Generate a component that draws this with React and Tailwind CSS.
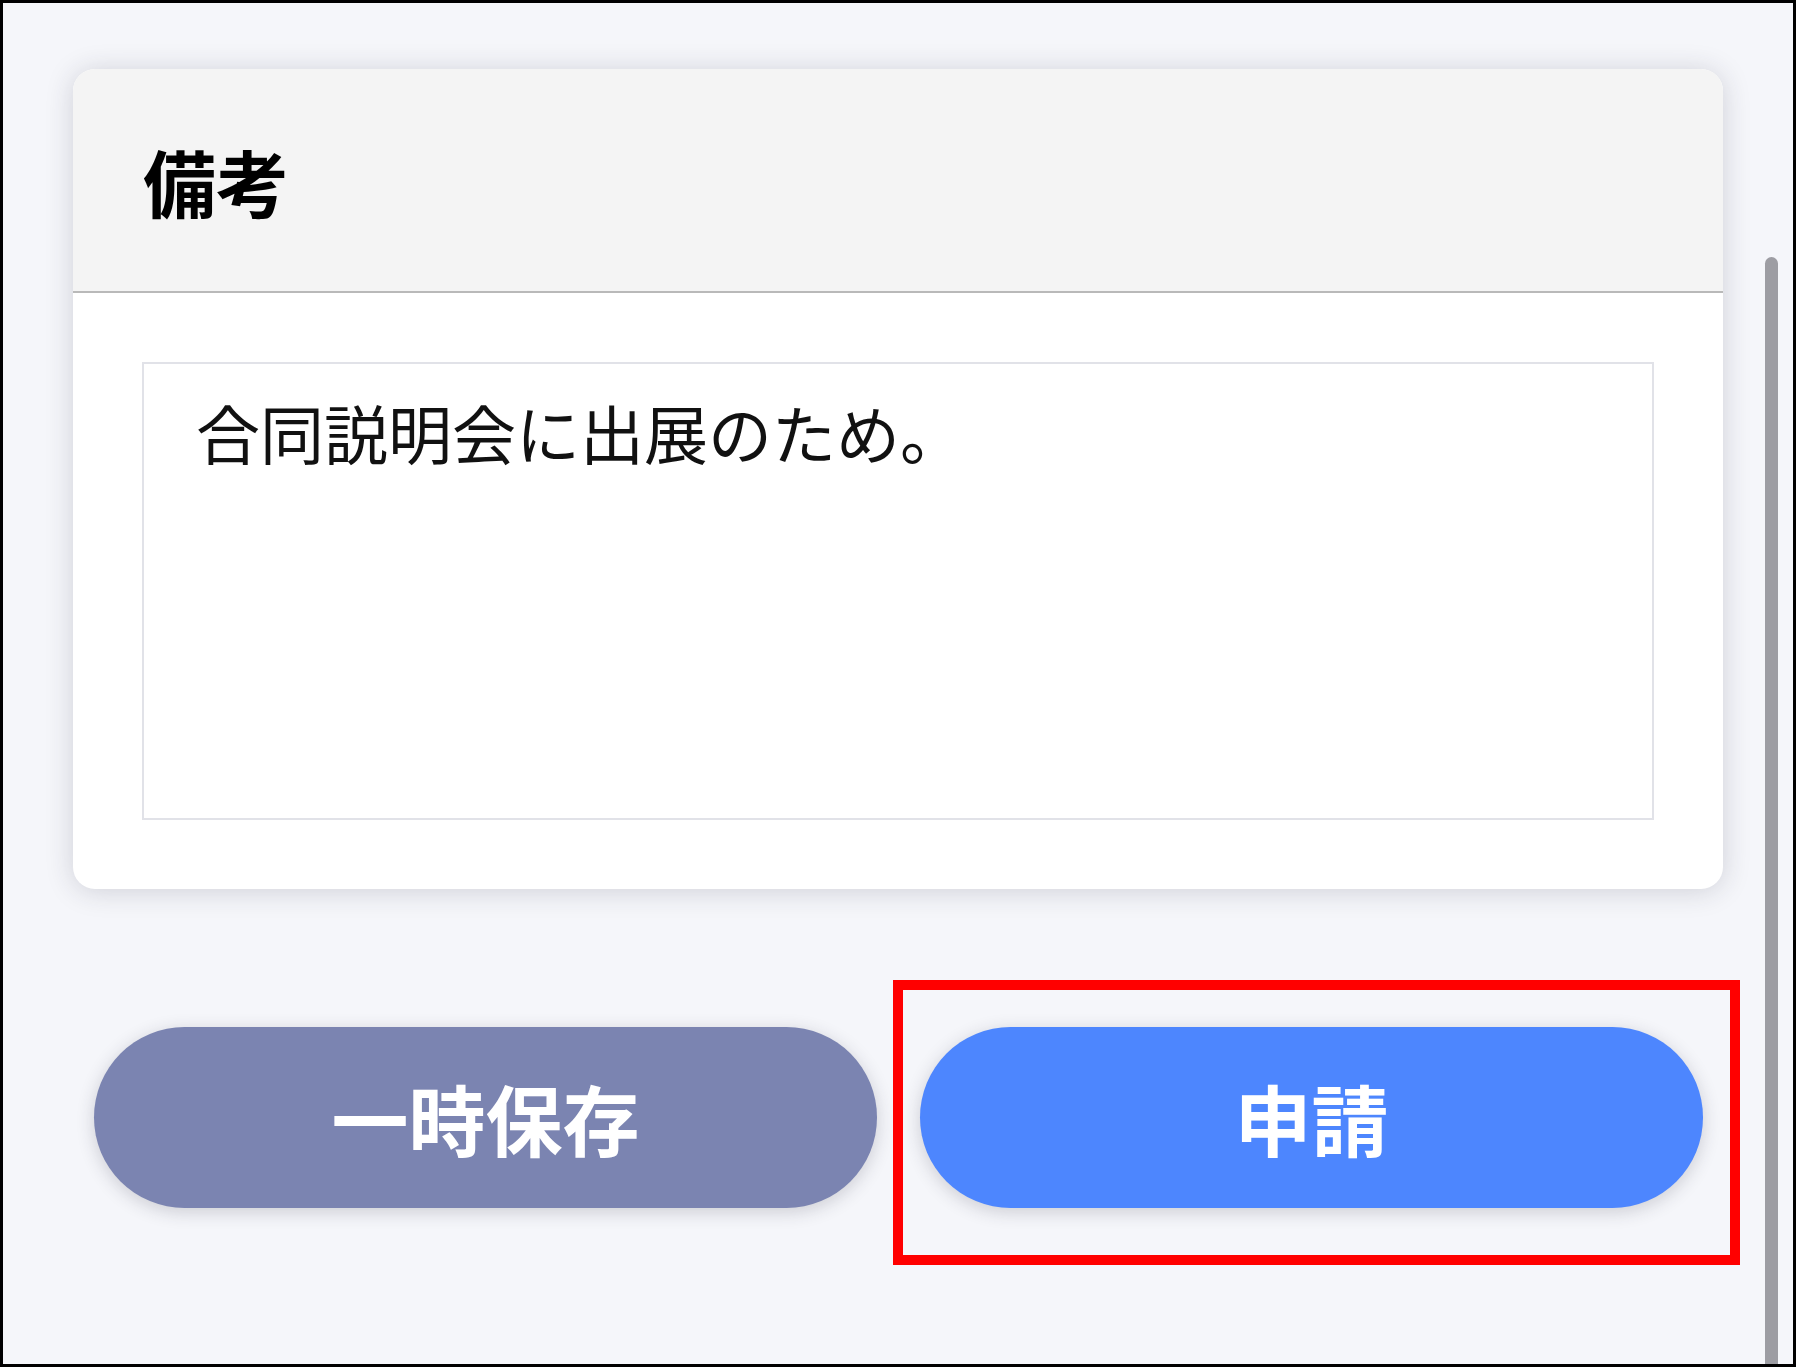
export default function App() {
  const font = { fontFamily: '"Noto Sans CJK JP", "Noto Sans", sans-serif' };
  return (
    <div
      className="relative w-[1796px] h-[1367px] overflow-hidden border-[3px] border-black bg-[#f5f6fa]"
      style={font}
    >
      <div className="pt-[66px] pl-[70px]">
        <div className="w-[1650px] rounded-[22px] bg-white shadow-[0_2px_28px_rgba(40,40,60,0.18)] overflow-hidden">
          <div className="h-[224px] bg-[#f4f4f4] border-b-2 border-[#b9b9b9] flex items-center pl-[70px]">
            <h2 className="text-[73px] leading-none font-bold text-black">備考</h2>
          </div>
          <div className="p-[69px] pt-[69px]">
            <div className="h-[458px] border-2 border-[#e1e2e8] pl-[52px] pt-[26px]">
              <p className="text-[64px] leading-[1.3] text-[#111]">合同説明会に出展のため。</p>
            </div>
          </div>
        </div>

        <div className="mt-[138px] ml-[21px] flex gap-[43px]">
          <button className="w-[783px] h-[181px] rounded-full bg-[#7b84b1] text-white text-[77px] font-bold shadow-[0_4px_18px_rgba(40,40,60,0.2)]">
            一時保存
          </button>
          <div className="relative">
            <button className="w-[783px] h-[181px] rounded-full bg-[#4d86fe] text-white text-[77px] font-bold shadow-[0_4px_18px_rgba(40,40,60,0.2)]">
              申請
            </button>
            <div className="absolute left-[-27px] top-[-47px] w-[847px] h-[285px] border-[10px] border-[#ff0000]" />
          </div>
        </div>
      </div>

      <div className="absolute right-[15px] top-[254px] w-[13px] h-[1200px] rounded-full bg-[#9d9da3]" />
    </div>
  );
}
